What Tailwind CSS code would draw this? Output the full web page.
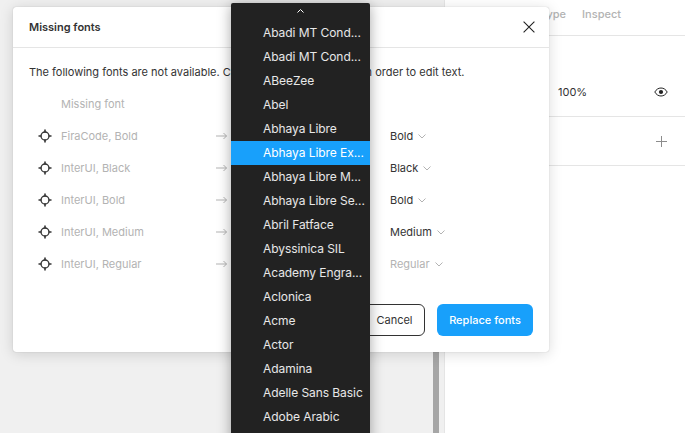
<!DOCTYPE html>
<html lang="en">
<head>
<meta charset="UTF-8">
<title>Missing fonts</title>
<script src="https://cdn.jsdelivr.net/npm/@tailwindcss/browser@4"></script>
</head>
<body class="w-[685px] h-[433px] overflow-hidden relative font-['Inter',sans-serif] text-[11px]">
  <div class="flex h-full">
    <!-- canvas -->
    <div class="w-[444px] h-full bg-[#f0f0f0] flex justify-end items-end">
      <div class="w-[6px] h-[90px] mr-[5px] bg-[#a6a6a6]"></div>
    </div>
    <!-- right panel -->
    <div class="flex-1 h-full bg-white border-l border-[#e5e5e5]">
      <div class="h-[36px] border-b border-[#e5e5e5] flex items-center gap-[16px] pb-[6px] pl-[95px] text-[#b3b3b3] font-medium">
        <span>Type</span>
        <span>Inspect</span>
      </div>
      <div class="h-[81px] border-b border-[#e5e5e5] flex items-center pt-[32px] pl-[113px] pr-[17px] justify-between text-[#333]">
        <span>100%</span>
        <svg width="14" height="10" viewBox="0 0 14 10" fill="none">
          <path d="M.8 5C2.3 2.4 4.4 1 7 1s4.7 1.4 6.2 4C11.7 7.600 9.600 9 7 9S2.300 7.600.8 5z" stroke="#222" stroke-width="1"/>
          <circle cx="7" cy="5" r="2.100" fill="#222"/>
        </svg>
      </div>
      <div class="h-[49px] border-b border-[#e5e5e5] flex items-center justify-end pr-[18px]">
        <svg width="11" height="11" viewBox="0 0 11 11"><path d="M5.500 0v11M0 5.500h11" stroke="#8c8c8c" stroke-width="1"/></svg>
      </div>
    </div>
  </div>

  <!-- dialog -->
  <div class="absolute left-[13px] top-[7px] w-[536px] h-[345px] bg-white rounded-[3px] shadow-[0_0_1px_rgba(0,0,0,0.3),0_2px_14px_rgba(0,0,0,0.15)] flex flex-col">
    <div class="h-[41px] shrink-0 border-b border-[#e5e5e5] flex items-center justify-between pl-[16px] pr-[14px]">
      <span class="font-semibold text-[#333]">Missing fonts</span>
      <svg width="12" height="12" viewBox="0 0 12 12"><path d="M.6.600l10.800 10.800M11.400.600L.6 11.400" stroke="#222" stroke-width="1.100"/></svg>
    </div>
    <div class="px-[16px] pt-[16px] text-[#333] leading-[16px] whitespace-nowrap">The following fonts are not available. Choose replacement fonts in order to edit text.</div>
    <div class="pt-[8px] flex flex-col text-[#b3b3b3]">
      <div class="h-[32px] flex items-center pl-[48px]">Missing font</div>

      <div class="h-[32px] flex items-center">
        <div class="w-[48px] flex justify-center pl-[16px]">
          <svg width="14" height="14" viewBox="0 0 14 14" fill="none"><circle cx="7" cy="7" r="4" stroke="#333" stroke-width="1.300"/><path d="M7 .5v3M7 10.500v3M.5 7h3M10.500 7h3" stroke="#333" stroke-width="1.600"/></svg>
        </div>
        <span class="w-[155px]">FiraCode, Bold</span>
        <svg width="11" height="8" viewBox="0 0 11 8" fill="none"><path d="M0 4h10.500M7.500 1l3 3-3 3" stroke="#b3b3b3"/></svg>
        <span class="ml-[163px] text-[#333]">Bold</span>
        <svg class="ml-[5px]" width="8" height="5" viewBox="0 0 8 5" fill="none"><path d="M.5.500L4 4 7.500.500" stroke="#b3b3b3"/></svg>
      </div>

      <div class="h-[32px] flex items-center">
        <div class="w-[48px] flex justify-center pl-[16px]">
          <svg width="14" height="14" viewBox="0 0 14 14" fill="none"><circle cx="7" cy="7" r="4" stroke="#333" stroke-width="1.300"/><path d="M7 .5v3M7 10.500v3M.5 7h3M10.500 7h3" stroke="#333" stroke-width="1.600"/></svg>
        </div>
        <span class="w-[155px]">InterUI, Black</span>
        <svg width="11" height="8" viewBox="0 0 11 8" fill="none"><path d="M0 4h10.500M7.500 1l3 3-3 3" stroke="#b3b3b3"/></svg>
        <span class="ml-[163px] text-[#333]">Black</span>
        <svg class="ml-[5px]" width="8" height="5" viewBox="0 0 8 5" fill="none"><path d="M.5.500L4 4 7.500.500" stroke="#b3b3b3"/></svg>
      </div>

      <div class="h-[32px] flex items-center">
        <div class="w-[48px] flex justify-center pl-[16px]">
          <svg width="14" height="14" viewBox="0 0 14 14" fill="none"><circle cx="7" cy="7" r="4" stroke="#333" stroke-width="1.300"/><path d="M7 .5v3M7 10.500v3M.5 7h3M10.500 7h3" stroke="#333" stroke-width="1.600"/></svg>
        </div>
        <span class="w-[155px]">InterUI, Bold</span>
        <svg width="11" height="8" viewBox="0 0 11 8" fill="none"><path d="M0 4h10.500M7.500 1l3 3-3 3" stroke="#b3b3b3"/></svg>
        <span class="ml-[163px] text-[#333]">Bold</span>
        <svg class="ml-[5px]" width="8" height="5" viewBox="0 0 8 5" fill="none"><path d="M.5.500L4 4 7.500.500" stroke="#b3b3b3"/></svg>
      </div>

      <div class="h-[32px] flex items-center">
        <div class="w-[48px] flex justify-center pl-[16px]">
          <svg width="14" height="14" viewBox="0 0 14 14" fill="none"><circle cx="7" cy="7" r="4" stroke="#333" stroke-width="1.300"/><path d="M7 .5v3M7 10.500v3M.5 7h3M10.500 7h3" stroke="#333" stroke-width="1.600"/></svg>
        </div>
        <span class="w-[155px]">InterUI, Medium</span>
        <svg width="11" height="8" viewBox="0 0 11 8" fill="none"><path d="M0 4h10.500M7.500 1l3 3-3 3" stroke="#b3b3b3"/></svg>
        <span class="ml-[163px] text-[#333]">Medium</span>
        <svg class="ml-[5px]" width="8" height="5" viewBox="0 0 8 5" fill="none"><path d="M.5.500L4 4 7.500.500" stroke="#b3b3b3"/></svg>
      </div>

      <div class="h-[32px] flex items-center">
        <div class="w-[48px] flex justify-center pl-[16px]">
          <svg width="14" height="14" viewBox="0 0 14 14" fill="none"><circle cx="7" cy="7" r="4" stroke="#333" stroke-width="1.300"/><path d="M7 .5v3M7 10.500v3M.5 7h3M10.500 7h3" stroke="#333" stroke-width="1.600"/></svg>
        </div>
        <span class="w-[155px]">InterUI, Regular</span>
        <svg width="11" height="8" viewBox="0 0 11 8" fill="none"><path d="M0 4h10.500M7.500 1l3 3-3 3" stroke="#b3b3b3"/></svg>
        <span class="ml-[163px]">Regular</span>
        <svg class="ml-[5px]" width="8" height="5" viewBox="0 0 8 5" fill="none"><path d="M.5.500L4 4 7.500.500" stroke="#b3b3b3"/></svg>
      </div>
    </div>
    <div class="mt-auto mb-[16px] flex justify-end gap-[12px] pr-[16px]">
      <button class="w-[61px] h-[32px] border border-[#333] rounded-[6px] text-[#333]">Cancel</button>
      <button class="w-[96px] h-[32px] bg-[#18a0fb] rounded-[6px] text-white font-medium">Replace fonts</button>
    </div>
  </div>

  <!-- font dropdown -->
  <div class="absolute left-[231px] top-[3px] w-[139px] h-[440px] bg-[#222222] rounded-[2px] shadow-[0_2px_14px_rgba(0,0,0,0.35)] text-white/90 text-[12px] tracking-[-0.005em]">
    <div class="h-[18px] flex justify-center items-center">
      <svg class="mt-[-2px]" width="7" height="4" viewBox="0 0 7 4" fill="none"><path d="M.5 3.500L3.500.500l3 3" stroke="#fff"/></svg>
    </div>
    <div class="flex flex-col">
      <div class="h-[24px] flex items-center pl-[32px]">Abadi MT Cond...</div>
      <div class="h-[24px] flex items-center pl-[32px]">Abadi MT Cond...</div>
      <div class="h-[24px] flex items-center pl-[32px]">ABeeZee</div>
      <div class="h-[24px] flex items-center pl-[32px]">Abel</div>
      <div class="h-[24px] flex items-center pl-[32px]">Abhaya Libre</div>
      <div class="h-[24px] flex items-center pl-[32px] bg-[#18a0fb] text-white">Abhaya Libre Ex...</div>
      <div class="h-[24px] flex items-center pl-[32px]">Abhaya Libre M...</div>
      <div class="h-[24px] flex items-center pl-[32px]">Abhaya Libre Se...</div>
      <div class="h-[24px] flex items-center pl-[32px]">Abril Fatface</div>
      <div class="h-[24px] flex items-center pl-[32px]">Abyssinica SIL</div>
      <div class="h-[24px] flex items-center pl-[32px]">Academy Engra...</div>
      <div class="h-[24px] flex items-center pl-[32px]">Aclonica</div>
      <div class="h-[24px] flex items-center pl-[32px]">Acme</div>
      <div class="h-[24px] flex items-center pl-[32px]">Actor</div>
      <div class="h-[24px] flex items-center pl-[32px]">Adamina</div>
      <div class="h-[24px] flex items-center pl-[32px]">Adelle Sans Basic</div>
      <div class="h-[24px] flex items-center pl-[32px]">Adobe Arabic</div>
    </div>
  </div>
</body>
</html>
